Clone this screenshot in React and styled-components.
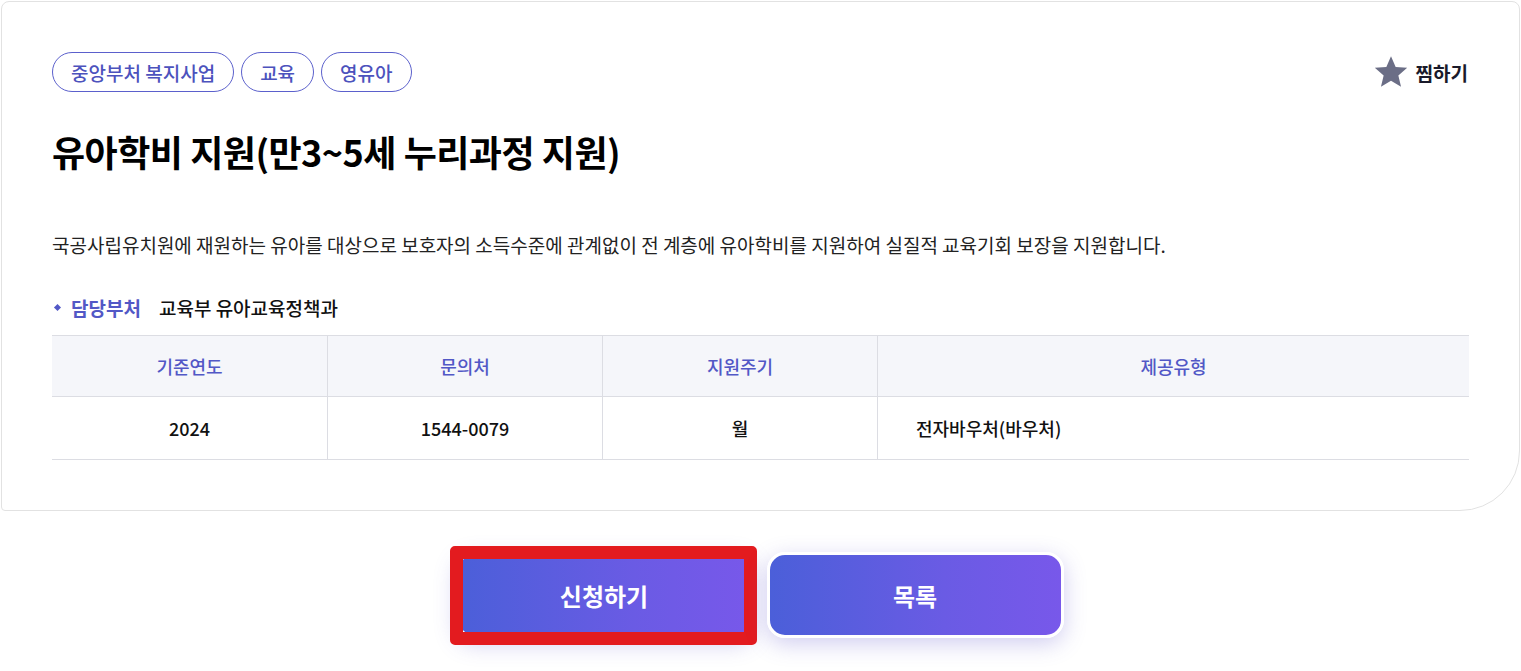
import React from 'react';
import styled, {createGlobalStyle} from "styled-components";

const GlobalStyle = createGlobalStyle`
    body {
        margin: 0;
        background: #fff;
        font-family: "Noto Sans CJK KR", "Noto Sans", sans-serif;
        color: #111;
    }
`;

const Page = styled.div`
    min-height: 671px;
    box-sizing: border-box;
    padding: 1px 1px 0 1px;
`;

const Card = styled.section`
    border: 1px solid #e2e2e2;
    border-radius: 8px 8px 60px 4px;
    padding: 50px 50px 50px 50px;
    background: #fff;
`;

const TopRow = styled.div`
    display: flex;
    justify-content: space-between;
    align-items: center;
`;

const Tags = styled.div`
    display: flex;
    gap: 7px;
`;

const Tag = styled.span`
    display: inline-flex;
    align-items: center;
    height: 38px;
    padding: 0 18px;
    border: 1px solid #5b60cc;
    border-radius: 20px;
    color: #4c52bd;
    font-size: 19px;
    font-weight: 500;
`;

const Bookmark = styled.button`
    display: flex;
    align-items: center;
    gap: 7px;
    background: none;
    border: 0;
    padding: 0 1px 0 0;
    font-family: inherit;
    font-size: 19px;
    font-weight: 700;
    color: #1a1a2a;
    cursor: pointer;
`;

const Title = styled.h1`
    margin: 33px 0 0;
    font-size: 36px;
    font-weight: 700;
    letter-spacing: -0.5px;
    color: #000;
`;

const Desc = styled.p`
    margin: 54px 0 0;
    font-size: 19px;
    color: #222;
`;

const DeptRow = styled.div`
    display: flex;
    align-items: center;
    margin-top: 36px;
    font-size: 19px;
`;

const DeptLabel = styled.span`
    display: flex;
    align-items: center;
    color: #5258c6;
    font-weight: 700;
    margin-right: 18px;
    &::before {
        content: "";
        width: 5px;
        height: 5px;
        background: #5258c6;
        transform: rotate(45deg);
        margin: 0 11px 0 3px;
    }
`;

const DeptValue = styled.span`
    font-weight: 500;
    color: #111;
`;

const Table = styled.div`
    display: grid;
    grid-template-columns: 275px 275px 275px 1fr;
    margin-top: 14px;
    border-top: 1px solid #dcdde3;
    border-bottom: 1px solid #dcdde3;
`;

const Cell = styled.div`
    display: flex;
    align-items: center;
    justify-content: ${p => p.$left ? "flex-start" : "center"};
    padding-left: ${p => p.$left ? "38px" : "0"};
    height: ${p => p.$head ? "60px" : "62px"};
    background: ${p => p.$head ? "#f5f6fa" : "#fff"};
    color: ${p => p.$head ? "#5258c6" : "#111"};
    font-size: 18px;
    font-weight: 500;
    border-left: ${p => p.$first ? "0" : "1px solid #dcdde3"};
    border-bottom: ${p => p.$head ? "1px solid #dcdde3" : "0"};
`;

const Buttons = styled.div`
    display: flex;
    justify-content: center;
    gap: 14px;
    margin-top: 41px;
    padding-right: 2px;
`;

const ButtonWrap = styled.div`
    position: relative;
`;

const ActionButton = styled.button`
    width: 297px;
    height: 86px;
    border: 3px solid #fff;
    border-radius: 18px;
    background: linear-gradient(90deg, #4b5fd9 0%, #6a5be4 60%, #7858ea 100%);
    color: #fff;
    font-family: inherit;
    font-size: 24px;
    font-weight: 700;
    box-shadow: 0 6px 22px rgba(90, 80, 200, 0.28);
    cursor: pointer;
`;

const Highlight = styled.div`
    position: absolute;
    left: -6px;
    top: -6px;
    width: 307px;
    height: 99px;
    box-sizing: border-box;
    border: 13px solid #e31b1f;
    border-radius: 5px;
    pointer-events: none;
`;

const StarIcon = () => (
    <svg width="36" height="36" viewBox="0 0 24 24">
        <path d="M12 1.5l3.1 7.1 7.7.6-5.9 5.1 1.8 7.6L12 17.9l-6.7 4 1.8-7.6-5.9-5.1 7.7-.6z" fill="#6b6e86"/>
    </svg>
);

const heads = ["기준연도", "문의처", "지원주기", "제공유형"];
const values = ["2024", "1544-0079", "월", "전자바우처(바우처)"];

const App = () => {
    return (
        <Page>
            <GlobalStyle/>
            <Card>
                <TopRow>
                    <Tags>
                        <Tag>중앙부처 복지사업</Tag>
                        <Tag>교육</Tag>
                        <Tag>영유아</Tag>
                    </Tags>
                    <Bookmark><StarIcon/>찜하기</Bookmark>
                </TopRow>
                <Title>유아학비 지원(만3~5세 누리과정 지원)</Title>
                <Desc>국공사립유치원에 재원하는 유아를 대상으로 보호자의 소득수준에 관계없이 전 계층에 유아학비를 지원하여 실질적 교육기회 보장을 지원합니다.</Desc>
                <DeptRow>
                    <DeptLabel>담당부처</DeptLabel>
                    <DeptValue>교육부 유아교육정책과</DeptValue>
                </DeptRow>
                <Table>
                    {heads.map((h, i) => <Cell key={h} $head $first={i === 0}>{h}</Cell>)}
                    {values.map((v, i) => <Cell key={v} $first={i === 0} $left={i === 3}>{v}</Cell>)}
                </Table>
            </Card>
            <Buttons>
                <ButtonWrap>
                    <ActionButton>신청하기</ActionButton>
                    <Highlight/>
                </ButtonWrap>
                <ButtonWrap>
                    <ActionButton>목록</ActionButton>
                </ButtonWrap>
            </Buttons>
        </Page>
    );
};

export default App;
